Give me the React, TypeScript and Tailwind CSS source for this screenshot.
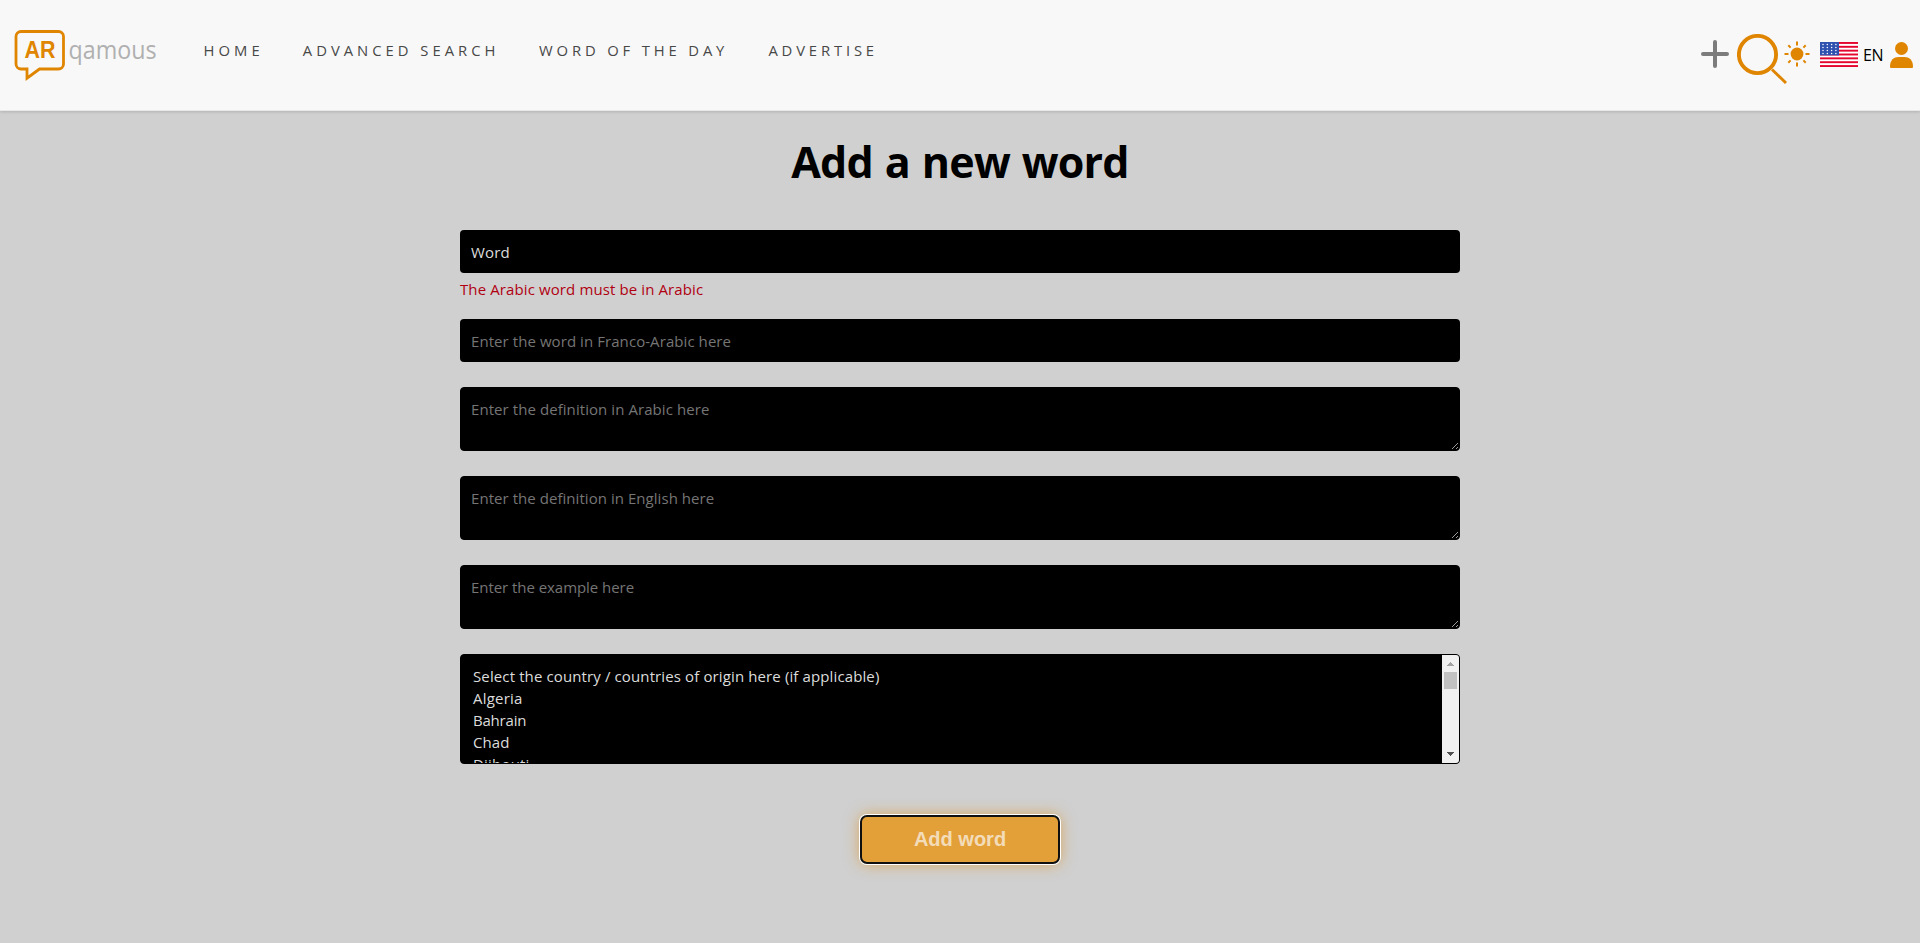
import React from "react";

const NAV = [
  { label: "HOME", cls: "w-[58px] tracking-[4.1px]" },
  { label: "ADVANCED SEARCH", cls: "w-[195px] tracking-[4px]" },
  { label: "WORD OF THE DAY", cls: "w-[188px] tracking-[3.85px]" },
  { label: "ADVERTISE", cls: "w-[110px] tracking-[3.85px]" },
];

const COUNTRIES = [
  { label: "Select the country / countries of origin here (if applicable)", cls: "tracking-[0.12px]" },
  { label: "Algeria", cls: "tracking-[0.2px]" },
  { label: "Bahrain", cls: "tracking-[-0.2px]" },
  { label: "Chad", cls: "tracking-[0.1px]" },
  { label: "Djibouti", cls: "tracking-[0.2px]" },
];

const AREAS = [
  { label: "Enter the definition in Arabic here", cls: "tracking-[0.07px]" },
  { label: "Enter the definition in English here", cls: "tracking-[0.05px]" },
  { label: "Enter the example here", cls: "tracking-[-0.05px]" },
];

function Logo() {
  return (
    <svg width="170" height="74" viewBox="0 0 170 74" className="shrink-0 overflow-visible">
      <path
        d="M21 21.500H58.500a5 5 0 0 1 5 5V54a5 5 0 0 1-5 5H39.500L27 68.200V59H21a5 5 0 0 1-5-5V26.500a5 5 0 0 1 5-5Z"
        fill="none"
        stroke="#df8500"
        strokeWidth="2.8"
      />
      <text x="24.500" y="48" fontFamily="Liberation Sans" fontWeight="700" fontSize="23.500" fill="#df8500" textLength="31" lengthAdjust="spacingAndGlyphs">AR</text>
      <text x="68.500" y="48.800" fontFamily="Open Sans" fontWeight="400" fontSize="26" fill="#b0b0b0" textLength="88" lengthAdjust="spacingAndGlyphs">qamous</text>
    </svg>
  );
}

function PlusIcon() {
  return (
    <svg width="28" height="28" viewBox="0 0 28 28">
      <path d="M14 2v24M2 14h24" stroke="#7c7c7c" strokeWidth="4" strokeLinecap="round" />
    </svg>
  );
}

function SearchIcon() {
  return (
    <svg width="50" height="50" viewBox="0 0 50 50">
      <circle cx="20.500" cy="20.500" r="18.600" fill="none" stroke="#df8500" strokeWidth="3.900" />
      <path d="M35 35.500L49 49" stroke="#df8500" strokeWidth="2.900" />
    </svg>
  );
}

function SunIcon() {
  return (
    <svg width="26" height="26" viewBox="0 0 26 26">
      <circle cx="13" cy="13" r="6.400" fill="#df8500" />
      <path
        d="M13 .5v4M13 21.500v4M.5 13h4M21.500 13h4M4.300 4.300l2.300 2.300M19.400 19.400l2.300 2.300M4.300 21.700l2.300-2.300M19.400 6.600l2.300-2.300"
        stroke="#df8500"
        strokeWidth="2"
      />
    </svg>
  );
}

function Flag() {
  const stripes = [0, 2, 4, 6, 8, 10, 12];
  const rows = [0, 1, 2, 3];
  return (
    <svg width="38" height="25" viewBox="0 0 38 25">
      <rect width="38" height="25" fill="#fff" />
      {stripes.map((s) => (
        <rect key={s} y={(s * 25) / 13} width="38" height={25 / 13} fill="#e4062f" />
      ))}
      <rect width="19" height="13.400" fill="#2f52b0" />
      {rows.map((r) =>
        rows.map((c) => (
          <circle key={`${r}-${c}`} cx={3 + c * 4.3} cy={2.4 + r * 3} r="0.75" fill="#fff" />
        ))
      )}
    </svg>
  );
}

function UserIcon() {
  return (
    <svg width="23" height="26" viewBox="0 0 23 26">
      <circle cx="11.500" cy="6.500" r="6.500" fill="#df8500" />
      <path d="M0 24.500C0 18 4 15 8.500 15h6c4.500 0 8.500 3 8.500 9.500 0 1-.5 1.500-1.500 1.500h-20C.5 26 0 25.500 0 24.500Z" fill="#df8500" />
    </svg>
  );
}

export default function App() {
  return (
    <div className="flex h-[943px] flex-col overflow-hidden bg-[#d0d0d0] font-['Open_Sans',sans-serif] text-[15px] text-black">
      <header className="relative flex h-[111px] shrink-0 items-start border-b border-[#e8e8e8] bg-[#f8f8f8] shadow-[0_1px_3px_rgba(0,0,0,0.15)]">
        <div className="pt-[10px]">
          <Logo />
        </div>
        <nav className="ml-[33.500px] flex gap-[41.300px] pt-[38px] text-[14.800px] leading-6 text-[#484848]">
          {NAV.map((n) => (
            <a key={n.label} className={`whitespace-nowrap ${n.cls}`}>{n.label}</a>
          ))}
        </nav>
        <div className="ml-auto flex items-start pr-[7px]">
          <div className="mr-[8px] pt-[40px]"><PlusIcon /></div>
          <div className="pt-[34px]"><SearchIcon /></div>
          <div className="-ml-[3px] mr-[10px] pt-[41px]"><SunIcon /></div>
          <div className="pt-[42px]"><Flag /></div>
          <span className="ml-[5px] w-[27px] pt-[43px] text-[16px] leading-[24px] tracking-[-0.3px]">EN</span>
          <div className="pt-[42px]"><UserIcon /></div>
        </div>
      </header>
      <main className="mx-auto flex w-[1000px] flex-col items-center">
        <h1 className="mt-[21px] h-[60px] whitespace-nowrap text-[43px] leading-[60px] font-bold tracking-[-0.8px] [word-spacing:1.500px]">Add a new word</h1>
        <input
          defaultValue="Word"
          className="mt-[38px] h-[43px] w-full rounded-[4px] bg-black px-[11px] pt-px tracking-[0.15px] text-[#dcdcdc] outline-none"
        />
        <p className="mt-[4px] h-[24px] w-full leading-[24px] tracking-[0.11px] text-[#b00012]">The Arabic word must be in Arabic</p>
        <input
          placeholder="Enter the word in Franco-Arabic here"
          className="mt-[18px] h-[43px] w-full rounded-[4px] bg-black px-[11px] tracking-[0.07px] outline-none placeholder:text-[#757575]"
        />
        <div className="mt-[25px] flex w-full flex-col gap-[25px]">
          {AREAS.map((a) => (
            <textarea
              key={a.label}
              placeholder={a.label}
              className={`block h-[64px] w-full resize overflow-auto rounded-[4px] border border-black bg-black px-[10px] py-[10px] leading-[22px] outline-none placeholder:text-[#757575] ${a.cls}`}
            />
          ))}
        </div>
        <div className="mt-[25px] flex h-[110px] w-full overflow-hidden rounded-[4px] border border-black bg-black">
          <div className="h-[108px] flex-1 overflow-hidden pt-[10px] pl-[12px] text-[#dcdcdc]">
            {COUNTRIES.map((c) => (
              <div key={c.label} className={`h-[22px] leading-[22px] whitespace-nowrap ${c.cls}`}>{c.label}</div>
            ))}
          </div>
          <div className="flex w-[17px] flex-col items-center bg-[#f1f1f1]">
            <svg width="17" height="17" viewBox="0 0 17 17" shapeRendering="crispEdges">
              <path d="M5 11h7v-1h-1v-1h-1v-1h-1v-1h-1v1h-1v1h-1v1h-1z" fill="#a3a3a3" />
            </svg>
            <div className="h-[17px] w-[13px] bg-[#c1c1c1]" />
            <svg className="mt-auto" width="17" height="17" viewBox="0 0 17 17" shapeRendering="crispEdges">
              <path d="M5 6h7v1h-1v1h-1v1h-1v1h-1v-1h-1v-1h-1v-1h-1z" fill="#505050" />
            </svg>
          </div>
        </div>
        <button className="mt-[51px] h-[49px] w-[200px] rounded-[7px] border-2 border-[#101010] bg-[#e3a039] pb-px font-['Liberation_Sans',sans-serif] text-[20px] leading-[44px] font-bold text-[#f3dcb9] shadow-[0_0_0_1px_#ffffff,0_0_15px_rgba(223,133,0,0.6)]">
          Add word
        </button>
      </main>
    </div>
  );
}
